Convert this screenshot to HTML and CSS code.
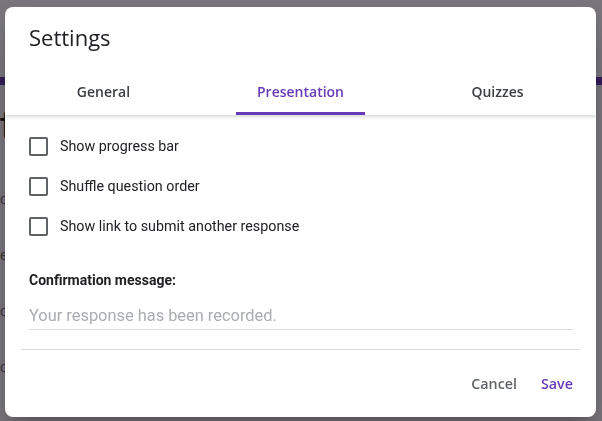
FILE: index.html
```html
<!DOCTYPE html>
<html lang="en">
  <head>
    <meta charset="UTF-8" />
    <meta name="viewport" content="width=device-width, initial-scale=1.0" />
    <title>Settings</title>
    <link rel="stylesheet" href="styles.css">
  </head>
  <body>
    <!-- the form page behind the dialog -->
    <div class="page">
      <div class="pageBar"></div>
      <div class="pageTitle">t</div>
      <div class="pageLine">c</div>
      <div class="pageLine">e</div>
      <div class="pageLine">o</div>
      <div class="pageLine">c</div>
    </div>
    <div class="scrim"></div>

    <div class="dialog">
      <div class="dialogHeader">
        <h1 class="dialogTitle">Settings</h1>
        <nav class="tabs">
          <a class="tab" href="#">General</a>
          <a class="tab active" href="#"><span>Presentation</span></a>
          <a class="tab" href="#">Quizzes</a>
        </nav>
      </div>

      <div class="dialogBody">
        <label class="check"><span class="box"></span>Show progress bar</label>
        <label class="check"><span class="box"></span>Shuffle question order</label>
        <label class="check"><span class="box"></span>Show link to submit another response</label>

        <div class="fieldLabel">Confirmation message:</div>
        <input class="field" placeholder="Your response has been recorded.">
      </div>

      <div class="dialogFooter">
        <button class="textButton">Cancel</button>
        <button class="textButton primary">Save</button>
      </div>
    </div>
  </body>
</html>
```

FILE: styles.css
```css
body {
  margin: 0;
  font-family: Roboto, "Liberation Sans", sans-serif;
  background: #f0ebf8;
  overflow: hidden;
}

.page {
  height: 421px;
  overflow: hidden;
  background: #f0ebf8;
}

.pageBar {
  height: 8px;
  margin-top: 77px;
  background: #673ab7;
}

.pageTitle {
  font-size: 40px;
  line-height: 48px;
  color: #202124;
  margin-top: 18px;
}

.pageLine {
  font-size: 14px;
  color: #70757a;
  margin-top: 40px;
}

.scrim {
  position: fixed;
  inset: 0;
  background: rgba(0, 0, 0, 0.5);
}

.dialog {
  position: fixed;
  left: 5px;
  top: 7px;
  width: 591px;
  height: 410px;
  background: #fff;
  border-radius: 8px;
  display: flex;
  flex-direction: column;
  box-shadow: 0 11px 15px -7px rgba(0,0,0,.2), 0 24px 38px 3px rgba(0,0,0,.14);
}

.dialogHeader {
  padding-top: 16px;
  box-shadow: 0 2px 3px rgba(60, 64, 67, 0.2);
  position: relative;
  z-index: 1;
}

.dialogTitle {
  margin: 0 0 16px 24px;
  font-family: "Open Sans", sans-serif;
  font-weight: 400;
  font-size: 22px;
  line-height: 28px;
  color: #202124;
}

.tabs {
  display: flex;
  height: 48px;
}

.tab {
  flex: 1;
  display: flex;
  align-items: center;
  justify-content: center;
  font-family: "Open Sans", sans-serif;
  font-size: 14px;
  font-weight: 600;
  color: #3c4043;
  text-decoration: none;
}

.tab.active {
  color: #673ab7;
}

.tab.active span {
  align-self: stretch;
  display: flex;
  align-items: center;
  padding: 3px 21px 0;
  border-bottom: 3px solid #673ab7;
  border-radius: 3px 3px 0 0;
}

.dialogBody {
  flex: 1;
  margin: 0 16px;
  padding: 11px 7px 0 8px;
  border-bottom: 1px solid #dadce0;
}

.check {
  display: flex;
  align-items: center;
  height: 40px;
  font-size: 14.3px;
  color: #202124;
}

.box {
  width: 15px;
  height: 15px;
  border: 2px solid #5f6368;
  border-radius: 2px;
  margin-right: 12px;
}

.fieldLabel {
  margin-top: 24px;
  font-size: 14px;
  font-weight: 700;
  line-height: 20px;
  color: #202124;
}

.field {
  display: block;
  width: 100%;
  box-sizing: border-box;
  margin-top: 14px;
  padding: 0 0 1px 0;
  border: 0;
  border-bottom: 1px solid #dadce0;
  font-family: Roboto, sans-serif;
  font-size: 16.4px;
  line-height: 24px;
  outline: none;
}

.field::placeholder {
  color: #a9acb0;
}

.dialogFooter {
  display: flex;
  justify-content: flex-end;
  gap: 8px;
  padding: 15px 15px 16px;
}

.textButton {
  height: 36px;
  padding: 0 8px;
  border: 0;
  background: none;
  font-family: "Open Sans", sans-serif;
  font-size: 14.3px;
  font-weight: 600;
  color: #5f6368;
  cursor: pointer;
}

.textButton.primary {
  color: #673ab7;
}
```
